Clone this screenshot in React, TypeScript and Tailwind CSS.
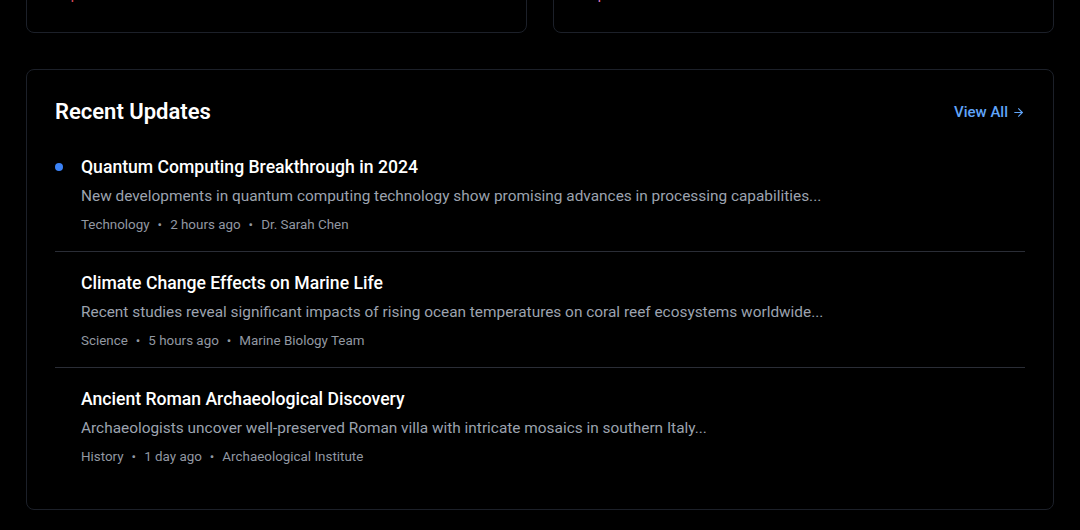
import { ArrowRight } from 'lucide-react'

const updates = [
  {
    title: 'Quantum Computing Breakthrough in 2024',
    excerpt: 'New developments in quantum computing technology show promising advances in processing capabilities...',
    category: 'Technology',
    time: '2 hours ago',
    author: 'Dr. Sarah Chen',
    unread: true,
  },
  {
    title: 'Climate Change Effects on Marine Life',
    excerpt: 'Recent studies reveal significant impacts of rising ocean temperatures on coral reef ecosystems worldwide...',
    category: 'Science',
    time: '5 hours ago',
    author: 'Marine Biology Team',
    unread: false,
  },
  {
    title: 'Ancient Roman Archaeological Discovery',
    excerpt: 'Archaeologists uncover well-preserved Roman villa with intricate mosaics in southern Italy...',
    category: 'History',
    time: '1 day ago',
    author: 'Archaeological Institute',
    unread: false,
  },
]

export default function App() {
  return (
    <div className="min-h-screen bg-black px-[26px] pb-5 font-['Roboto',sans-serif] overflow-hidden">
      <div className="-mt-[129px] grid grid-cols-2 gap-[26px]">
        <div className="flex h-[162px] flex-col justify-end rounded-lg border border-[#1c2029] p-7">
          <h3 className="text-lg font-semibold text-white">Trending Topics</h3>
          <p className="mt-2 text-sm text-[#e0505f]">Top 10 this month</p>
        </div>
        <div className="flex h-[162px] flex-col justify-end rounded-lg border border-[#1c2029] p-7">
          <h3 className="text-lg font-semibold text-white">Popular Authors</h3>
          <p className="mt-2 text-sm text-[#e879c9]">Top 5 authors</p>
        </div>
      </div>

      <div className="mt-9 rounded-lg border border-[#1c2029] p-7">
        <div className="mb-[27px] flex items-center justify-between">
          <h2 className="text-[22px] leading-7 font-semibold text-white">Recent Updates</h2>
          <button className="flex items-center gap-1 text-[15px] font-medium text-[#60a5fa]">
            View All
            <ArrowRight size={13} strokeWidth={2} />
          </button>
        </div>
        <div>
          {updates.map((u) => (
            <div
              key={u.title}
              className="flex items-start gap-[18px] border-b border-[#2a2d36] pt-[17px] pb-[18px] first:pt-0 last:border-b-0 last:pb-4"
            >
              <span
                className={`mt-[10px] h-2 w-2 shrink-0 rounded-full ${u.unread ? 'bg-[#3b82f6]' : 'bg-transparent'}`}
              />
              <div className="min-w-0">
                <h3 className="text-[17.6px] leading-7 font-medium text-white">{u.title}</h3>
                <p className="mt-[3px] text-[15.4px] leading-6 text-[#9ca3af]">{u.excerpt}</p>
                <div className="mt-[9px] flex items-center gap-2 text-[13.4px] leading-4 text-[#9298a2]">
                  <span>{u.category}</span>
                  <span>•</span>
                  <span>{u.time}</span>
                  <span>•</span>
                  <span>{u.author}</span>
                </div>
              </div>
            </div>
          ))}
        </div>
      </div>
    </div>
  )
}
